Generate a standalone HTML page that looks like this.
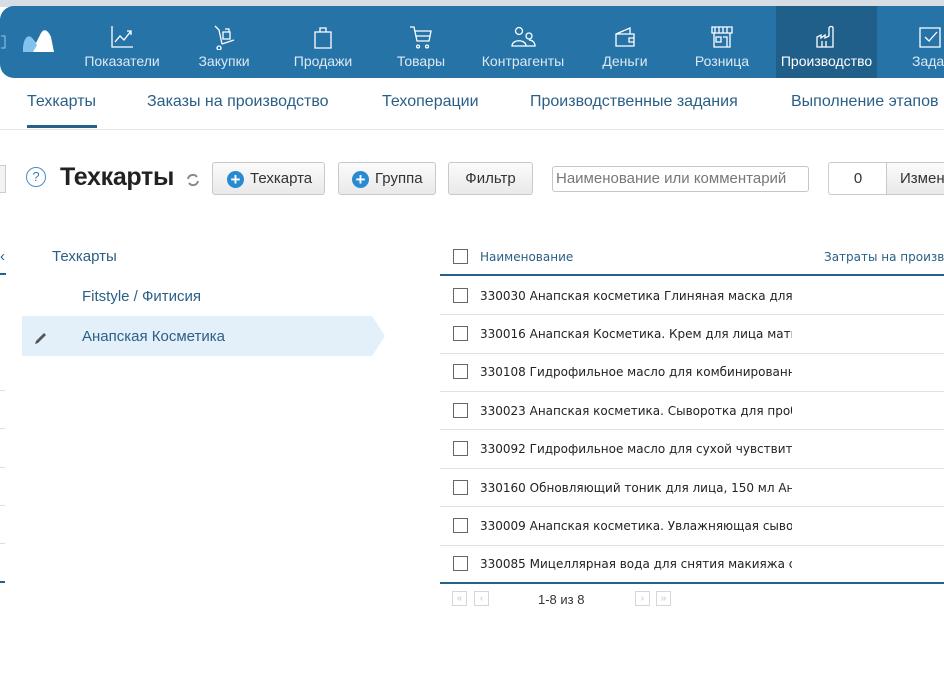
<!DOCTYPE html>
<html><head><meta charset="utf-8"><style>
*{box-sizing:border-box;margin:0;padding:0}
body{width:944px;height:700px;overflow:hidden;background:#fff;font-family:"Liberation Sans",Arial,sans-serif;position:relative}
.top{position:absolute;left:0;top:0;width:944px;height:7px;background:#d6dde4}
.nav{position:absolute;left:0;top:6px;width:960px;height:72px;background:#2673a8;border-radius:14px 0 0 14px}
.it{position:absolute;top:0;height:72px;color:#dce9f3;font-size:14px;text-align:center}
.it svg{position:absolute;top:18px;left:50%;margin-left:-13px}
.it span{position:absolute;top:47px;left:0;right:0;white-space:nowrap}
.act{background:#215f8b;color:#fff}
.tabs a{position:absolute;top:93px;font-size:16px;color:#2a5f86;text-decoration:none;white-space:nowrap}
.abs{position:absolute}
.btn{position:absolute;top:162px;height:33px;border:1px solid #c9c9c9;border-radius:3px;background:linear-gradient(#fbfbfb,#e9e9e9);font-size:15px;color:#333;line-height:31px;white-space:nowrap}
.plus{display:inline-block;width:17px;height:17px;border-radius:50%;background:#2a8ad0;color:#fff;font-weight:bold;font-size:17px;line-height:17px;text-align:center;vertical-align:-2px;margin-right:6px}
.cb{position:absolute;left:453px;width:15px;height:15px;border:1px solid #666;background:#fff}
.row{position:absolute;left:480px;width:312px;overflow:hidden;white-space:nowrap;font-family:"DejaVu Sans",Verdana,sans-serif;font-size:12px;color:#222}
.sep{position:absolute;left:440px;width:504px;height:1px;background:#e2e2e2}
.pg{position:absolute;top:591px;width:15px;height:15px;border:1px solid #d6d6d6;color:#c8c8c8;font-size:10px;line-height:13px;text-align:center}
</style></head><body>
<div class="top"></div>
<div class="nav">
<svg class="abs" style="left:0;top:28px" width="6" height="20"><path d="M1 2h4v12H1" stroke="#9fc3de" fill="none"/></svg>
<svg class="abs" style="left:21px;top:22px" width="34" height="26"><path d="M2 24 C2 10 7 6 11 10 L15 15 L20 5 C23 0 27 2 30 9 L33 24Z" fill="#fff"/><path d="M2 24 C2 10 7 6 11 10 L16 17 L12 24Z" fill="#7fc3ee"/></svg>
<div class="it" style="left:80px;width:84px"><svg width="26" height="26" viewBox="0 0 26 26" fill="none" stroke="#fff" stroke-width="1.3"><path d="M3 2v21h21M6 18l5-6 4 4 7-9M18 7h4v4"/></svg><span>Показатели</span></div>
<div class="it" style="left:186px;width:76px"><svg width="26" height="26" viewBox="0 0 26 26" fill="none" stroke="#fff" stroke-width="1.3"><path d="M4 2l4 4 3 14M8 22a2 2 0 1 0 .1 0M11 20l12-4M12 8h7v7h-7zM14 5h4v3"/></svg><span>Закупки</span></div>
<div class="it" style="left:284px;width:78px"><svg width="26" height="26" viewBox="0 0 26 26" fill="none" stroke="#fff" stroke-width="1.3"><path d="M5 8h16v16H5zM10 8V4h6v4"/></svg><span>Продажи</span></div>
<div class="it" style="left:384px;width:74px"><svg width="26" height="26" viewBox="0 0 26 26" fill="none" stroke="#fff" stroke-width="1.3"><path d="M2 3h4l3 14h12l2-10H7M10 21a1.5 1.5 0 1 0 .1 0M19 21a1.5 1.5 0 1 0 .1 0M8 12h14"/></svg><span>Товары</span></div>
<div class="it" style="left:476px;width:94px"><svg width="26" height="26" viewBox="0 0 26 26" fill="none" stroke="#fff" stroke-width="1.3"><circle cx="9" cy="7" r="3.5"/><path d="M2 22c0-7 14-7 14 0z"/><circle cx="19" cy="12" r="3"/><path d="M16 22h9c0-4-3-6-6-6"/></svg><span>Контрагенты</span></div>
<div class="it" style="left:588px;width:74px"><svg width="26" height="26" viewBox="0 0 26 26" fill="none" stroke="#fff" stroke-width="1.3"><path d="M4 10l14-6v6M4 10h18v12H4zM17 14h5v4h-5z"/></svg><span>Деньги</span></div>
<div class="it" style="left:684px;width:76px"><svg width="26" height="26" viewBox="0 0 26 26" fill="none" stroke="#fff" stroke-width="1.3"><path d="M3 3h20v6H3zM5 9v14h16V9M7 13h5v5H7zM14 13h4v10M6 3v6M10 3v6M14 3v6M18 3v6"/></svg><span>Розница</span></div>
<div class="it act" style="left:776px;width:101px"><svg width="26" height="26" viewBox="0 0 26 26" fill="none" stroke="#fff" stroke-width="1.3"><path d="M3 23V13l4-2v3l4-3v3l4-2V4c0-2 4-2 4 0v19zM8 23v-6M12 23v-6"/></svg><span>Производство</span></div>
<div class="it" style="left:900px;width:60px"><svg width="26" height="26" viewBox="0 0 26 26" fill="none" stroke="#fff" stroke-width="1.3"><path d="M3 4h20v19H3zM8 13l4 4 8-9"/></svg><span style="text-align:left;left:12px">Зада</span></div>
</div>
<div class="tabs">
<a style="left:27px">Техкарты</a><a style="left:147px">Заказы на производство</a><a style="left:382px">Техоперации</a><a style="left:530px">Производственные задания</a><a style="left:791px">Выполнение этапов</a>
</div>
<div class="abs" style="left:27px;top:125px;width:70px;height:3px;background:#26618e"></div>
<div class="abs" style="left:0;top:129px;width:944px;height:1px;background:#e6e6e6"></div>
<div class="abs" style="left:0;top:165px;width:6px;height:28px;border:1px solid #ccc;border-left:0;background:#f3f3f3"></div>
<div class="abs" style="left:26px;top:167px;width:20px;height:20px;border:1.5px solid #4a8cc6;border-radius:50%;color:#3a7db8;font-size:13px;text-align:center;line-height:17px">?</div>
<div class="abs" style="left:60px;top:163px;font-size:25px;font-weight:bold;color:#222;letter-spacing:-0.3px">Техкарты</div>
<svg class="abs" style="left:186px;top:173px" width="14" height="14" viewBox="0 0 14 14" fill="none" stroke="#8a8a8a" stroke-width="2"><path d="M2 6a5 5 0 0 1 9-2M12 8a5 5 0 0 1-9 2"/></svg>
<div class="btn" style="left:212px;width:113px;padding-left:14px"><span class="plus">+</span>Техкарта</div>
<div class="btn" style="left:338px;width:98px;padding-left:13px"><span class="plus">+</span>Группа</div>
<div class="btn" style="left:448px;width:85px;text-align:center">Фильтр</div>
<div class="abs" style="left:552px;top:166px;width:257px;height:26px;border:1px solid #c6c6c6;border-radius:3px;font-size:15px;color:#777;padding-left:3px;line-height:24px">Наименование или комментарий</div>
<div class="abs" style="left:828px;top:162px;width:60px;height:33px;border:1px solid #ccc;border-radius:3px 0 0 3px;font-size:15px;text-align:center;line-height:31px;color:#333">0</div>
<div class="btn" style="left:886px;width:70px;padding-left:13px;border-radius:0">Измен</div>
<div class="abs" style="left:0;top:248px;font-size:15px;color:#26618e">‹</div>
<div class="abs" style="left:0;top:273px;width:6px;height:2px;background:#26618e"></div>
<div class="abs" style="left:52px;top:248px;font-size:15px;color:#2a5f86">Техкарты</div>
<div class="abs" style="left:82px;top:288px;font-size:15px;color:#2a5f86">Fitstyle / Фитисия</div>
<svg class="abs" style="left:22px;top:316px" width="364" height="40"><path d="M0 0H350L363 20L350 40H0Z" fill="#e3f0fa"/><path d="M14 25l8-8 2 2-8 8-3 1z" fill="#555"/></svg>
<div class="abs" style="left:82px;top:328px;font-size:15px;color:#2a5f86">Анапская Косметика</div>
<div class="abs" style="left:0;top:390px;width:5px;height:1px;background:#ddd"></div>
<div class="abs" style="left:0;top:428px;width:5px;height:1px;background:#ddd"></div>
<div class="abs" style="left:0;top:467px;width:5px;height:1px;background:#ddd"></div>
<div class="abs" style="left:0;top:505px;width:5px;height:1px;background:#ddd"></div>
<div class="abs" style="left:0;top:543px;width:5px;height:1px;background:#ddd"></div>
<div class="abs" style="left:0;top:581px;width:5px;height:2px;background:#26618e"></div>
<div class="cb" style="top:249px"></div>
<div class="row" style="top:250px;color:#2a5f86">Наименование</div>
<div class="abs" style="left:824px;top:250px;font-family:'DejaVu Sans',sans-serif;font-size:12px;color:#2a5f86;white-space:nowrap">Затраты на произв</div>
<div class="abs" style="left:440px;top:274px;width:504px;height:2px;background:#26618e"></div>
<div class="cb" style="top:288px"></div><div class="row" style="top:289px">330030 Анапская косметика Глиняная маска для</div><div class="sep" style="top:314px"></div>
<div class="cb" style="top:326px"></div><div class="row" style="top:327px">330016 Анапская Косметика. Крем для лица матирующий</div><div class="sep" style="top:353px"></div>
<div class="cb" style="top:364px"></div><div class="row" style="top:365px">330108 Гидрофильное масло для комбинированной</div><div class="sep" style="top:391px"></div>
<div class="cb" style="top:403px"></div><div class="row" style="top:404px">330023 Анапская косметика. Сыворотка для проблемной</div><div class="sep" style="top:429px"></div>
<div class="cb" style="top:441px"></div><div class="row" style="top:442px">330092 Гидрофильное масло для сухой чувствительной</div><div class="sep" style="top:468px"></div>
<div class="cb" style="top:480px"></div><div class="row" style="top:481px">330160 Обновляющий тоник для лица, 150 мл Анапская</div><div class="sep" style="top:506px"></div>
<div class="cb" style="top:518px"></div><div class="row" style="top:519px">330009 Анапская косметика. Увлажняющая сыворотка</div><div class="sep" style="top:545px"></div>
<div class="cb" style="top:556px"></div><div class="row" style="top:557px">330085 Мицеллярная вода для снятия макияжа с</div>
<div class="abs" style="left:440px;top:582px;width:504px;height:2px;background:#26618e"></div>
<div class="pg" style="left:452px">«</div><div class="pg" style="left:474px">‹</div>
<div class="abs" style="left:538px;top:592px;font-size:13px;color:#333">1-8 из 8</div>
<div class="pg" style="left:635px">›</div><div class="pg" style="left:656px">»</div>
</body></html>
